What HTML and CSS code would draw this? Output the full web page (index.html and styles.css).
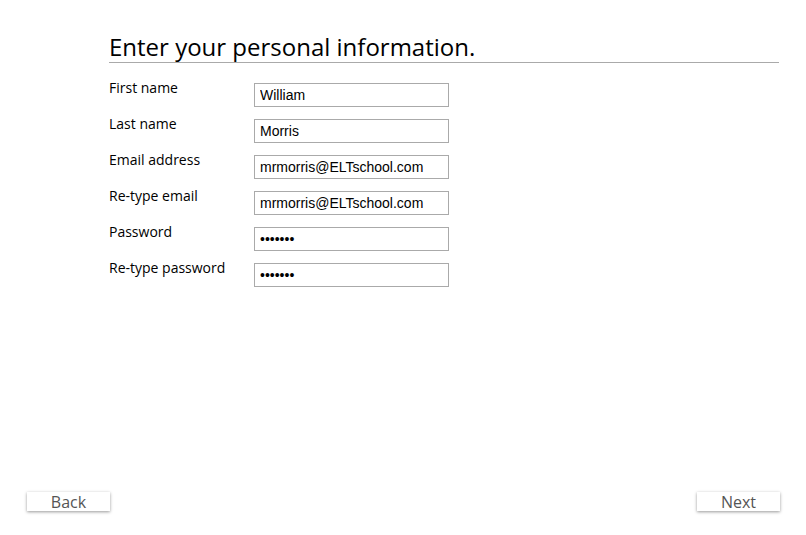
FILE: index.html
```html
<!DOCTYPE html>
<html lang="en">
<head>
<meta charset="utf-8">
<meta name="viewport" content="width=device-width, initial-scale=1">
<title>Personal information</title>
<link rel="stylesheet" href="styles.css">
</head>
<body>
<form class="page">
  <main class="details">
    <h1 class="title">Enter your personal information.</h1>
    <div class="field"><label for="first">First name</label><input id="first" type="text" value="William"></div>
    <div class="field"><label for="last">Last name</label><input id="last" type="text" value="Morris"></div>
    <div class="field"><label for="email">Email address</label><input id="email" type="email" value="mrmorris@ELTschool.com"></div>
    <div class="field"><label for="email2">Re-type email</label><input id="email2" type="email" value="mrmorris@ELTschool.com"></div>
    <div class="field"><label for="pass">Password</label><input id="pass" type="password" value="morris1"></div>
    <div class="field"><label for="pass2">Re-type password</label><input id="pass2" type="password" value="morris1"></div>
  </main>
  <footer class="actions">
    <button type="button">Back</button>
    <button type="submit">Next</button>
  </footer>
</form>
</body>
</html>
```

FILE: styles.css
```css
* {
  box-sizing: border-box;
}

body {
  margin: 0;
  background: #fff;
  color: #000;
  font-family: "Open Sans", sans-serif;
}

.page {
  display: flex;
  flex-direction: column;
  justify-content: space-between;
  min-height: 100vh;
  padding: 32px 26px 24px 27px;
}

.details {
  padding: 0 1px 0 82px;
}

.title {
  margin: 0 0 20px;
  border-bottom: 1px solid #aaa;
  font-size: 24px;
  font-weight: 400;
  line-height: 30px;
}

.field {
  display: grid;
  grid-template-columns: 145px 195px;
  align-items: start;
  margin-bottom: 12px;
}

.field label {
  font-size: 14px;
  line-height: 10px;
}

.field input {
  width: 100%;
  height: 24px;
  padding: 0 5px;
  border: 1px solid #aaa;
  border-radius: 0;
  background: #fff;
  color: #000;
  font-family: "Liberation Sans", Arial, sans-serif;
  font-size: 14px;
}

.actions {
  display: flex;
  justify-content: space-between;
}

.actions button {
  width: 83px;
  height: 19px;
  padding: 0;
  border: 0;
  background: #fff;
  box-shadow: 0 1px 3px #999;
  color: #555;
  font-family: inherit;
  font-size: 16px;
  line-height: 20px;
}
```
